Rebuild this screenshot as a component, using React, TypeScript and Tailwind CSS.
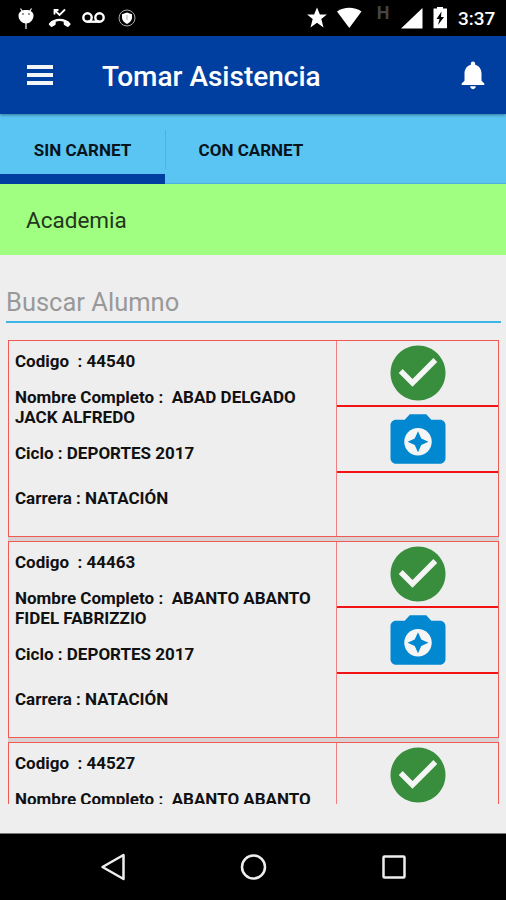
import type { ReactNode } from 'react';

type Student = {
  code: string;
  name: string;
  cycle?: string;
  career?: string;
};

const STUDENTS: Student[] = [
  {
    code: '44540',
    name: 'ABAD DELGADO JACK ALFREDO',
    cycle: 'DEPORTES 2017',
    career: 'NATACIÓN',
  },
  {
    code: '44463',
    name: 'ABANTO ABANTO FIDEL FABRIZZIO',
    cycle: 'DEPORTES 2017',
    career: 'NATACIÓN',
  },
  {
    code: '44527',
    name: 'ABANTO ABANTO',
  },
];

function StatusBar() {
  return (
    <div className="flex h-9 shrink-0 bg-black text-white">
      <svg width="150" height="36" viewBox="0 0 150 36" fill="currentColor">
        {/* debug bean */}
        <path d="M20.5 8.5l2 3M31.5 8.5l-2 3M26 23v6" stroke="currentColor" strokeWidth="1.2" />
        <path d="M18.5 15.5c0-3.5 3.2-5.5 7.5-5.5s7.5 2 7.5 5.5c0 4.5-3.7 8-7.5 8s-7.5-3.5-7.5-8z" />
        <circle cx="23" cy="14" r="0.9" fill="#666" />
        <circle cx="29" cy="14" r="0.9" fill="#666" />
        {/* missed call */}
        <path d="M54.5 14.5v-4.5h4M54.5 10l5 5 5.5-5.5" fill="none" stroke="currentColor" strokeWidth="1.8" />
        <path d="M49 23.5c2.5-3.2 6.5-4.7 10.7-4.7s8.2 1.5 10.7 4.7c.3.4.3.9 0 1.2l-2 2c-.3.3-.8.3-1.2.1l-3-1.8c-.3-.2-.5-.5-.5-.9v-2.4c-2.6-.8-5.4-.8-8 0v2.4c0 .4-.2.7-.5.9l-3 1.8c-.4.2-.9.2-1.2-.1l-2-2c-.3-.3-.3-.8 0-1.2z" />
        {/* voicemail */}
        <g fill="none" stroke="currentColor" strokeWidth="2.4">
          <circle cx="87.5" cy="17.5" r="4.2" />
          <circle cx="99.5" cy="17.5" r="4.2" />
          <path d="M87.5 21.7h12" />
        </g>
        {/* shield */}
        <circle cx="127" cy="18" r="8" fill="none" stroke="#aaa" strokeWidth="1" />
        <path d="M127 12.5l5 1.8v3c0 3-2 5.5-5 6.7-3-1.2-5-3.7-5-6.7v-3z" />
        <path d="M127 15v5" stroke="#aaa" strokeWidth="1" />
      </svg>
      {/* star and wifi */}
      <svg className="ml-auto" width="60" height="36" viewBox="0 0 60 36" fill="currentColor">
        <path d="M12 7.5l2.9 7h7l-5.6 4.6 2.2 8.3-6.5-4.7-6.5 4.7 2.2-8.3-5.6-4.6h7z" />
        <path d="M32 11.5c7-5 17.5-5 24.5 0l-12.2 16.5z" />
      </svg>
      <span className="mt-[3px] w-9 text-center text-[18px] leading-5 font-bold text-[#444]">
        H
      </span>
      {/* signal and battery */}
      <svg width="49" height="36" viewBox="96 0 49 36" fill="currentColor">
        <path d="M117.5 8v20.5H96z" />
        <path d="M128.5 8.5h3.5v-1.5h6v1.5h4v19.7h-13.5z" />
        <path d="M136.5 11.5l-5 7.5h3l-1.5 6 6-8h-3z" fill="#000" />
      </svg>
      <span className="mt-[9px] w-[56px] pl-2 text-[19px] leading-5 font-medium">
        3:37
      </span>
    </div>
  );
}

function Toolbar() {
  return (
    <header className="relative z-10 flex h-[78px] shrink-0 items-center bg-[#003f9f] pl-[27px] text-white shadow-[0_1px_3px_rgba(0,0,0,0.4)]">
      <div className="-mt-px flex w-[26px] flex-col gap-1">
        <div className="h-1 bg-[#f4f4fb]" />
        <div className="h-1 bg-[#f4f4fb]" />
        <div className="h-1 bg-[#f4f4fb]" />
      </div>
      <h1 className="ml-[49px] pt-[3px] text-[28px] font-medium">Tomar Asistencia</h1>
      <svg className="mr-4 ml-auto" width="34" height="34" viewBox="0 0 24 24" fill="currentColor">
        <path d="M12 22c1.1 0 2-.9 2-2h-4c0 1.1.9 2 2 2zm6-6v-5c0-3.07-1.64-5.64-4.5-6.32V4c0-.83-.67-1.5-1.5-1.5s-1.5.67-1.5 1.5v.68C7.63 5.36 6 7.92 6 11v5l-2 2v1h16v-1l-2-2z" />
      </svg>
    </header>
  );
}

function Tabs() {
  return (
    <nav className="flex h-[70px] shrink-0 border-b border-[#50aedb] bg-[#5ac5f3] text-[17px] font-bold text-[#07141b]">
      <button className="-mb-px h-[70px] w-[165px] border-b-[10px] border-[#003f9f] pt-3.5">
        SIN CARNET
      </button>
      <div className="mt-4 h-[39px] w-px bg-[#50b1dc]" />
      <button className="h-[70px] w-[170px] pt-1">CON CARNET</button>
    </nav>
  );
}

function CheckIcon() {
  return (
    <svg className="shrink-0" width="66" height="66" viewBox="0 0 24 24" fill="#388e3c">
      <path d="M12 2C6.48 2 2 6.48 2 12s4.48 10 10 10 10-4.48 10-10S17.52 2 12 2z" />
      <path d="M10 17l-5-5 1.41-1.41L10 14.17l7.59-7.59L19 8l-9 9z" fill="#f5f5f5" />
    </svg>
  );
}

function CameraIcon() {
  return (
    <svg className="shrink-0" width="66" height="66" viewBox="0 0 24 24" fill="#0288d1">
      <path d="M9 3L7.17 5H4c-1.1 0-2 .9-2 2v12c0 1.1.9 2 2 2h16c1.1 0 2-.9 2-2V7c0-1.1-.9-2-2-2h-3.17L15 3H9z" />
      <circle cx="12" cy="13" r="5" fill="#f5f5f5" />
      <path d="M12 9.2l1.19 2.61L15.8 13l-2.61 1.19L12 16.8l-1.19-2.61L8.2 13l2.61-1.19z" />
    </svg>
  );
}

function ActionCell({ children }: { children?: ReactNode }) {
  return (
    <div className="flex h-[66px] items-center justify-center last:h-[63px]">
      {children}
    </div>
  );
}

function StudentCard({ student }: { student: Student }) {
  return (
    <li className="flex h-[197px] shrink-0 border border-[#ef5a55]">
      <div className="w-[327px] pt-[10px] pl-[6px] text-[17px] leading-5 font-bold whitespace-pre-wrap">
        <p>{`Codigo  : ${student.code}`}</p>
        <p className="mt-4">{`Nombre Completo :  ${student.name}`}</p>
        {student.cycle && <p className="mt-4">{`Ciclo : ${student.cycle}`}</p>}
        {student.career && (
          <p className="mt-[25px]">{`Carrera : ${student.career}`}</p>
        )}
      </div>
      <div className="flex-1 divide-y-2 divide-[#f21414] border-l border-[#f28080]">
        <ActionCell>
          <CheckIcon />
        </ActionCell>
        <ActionCell>
          <CameraIcon />
        </ActionCell>
        <ActionCell />
      </div>
    </li>
  );
}

function NavigationBar() {
  return (
    <div className="h-[67px] shrink-0 border-t border-[#777] bg-black">
      <svg width="506" height="66" viewBox="0 0 506 66" fill="none" stroke="#eee" strokeWidth="2.5">
        <path d="M123.5 21v24L102.5 33z" strokeLinejoin="round" />
        <circle cx="253.5" cy="33" r="11.5" />
        <rect x="383.5" y="22.5" width="21" height="21" rx="1" />
      </svg>
    </div>
  );
}

export default function App() {
  return (
    <div className="flex h-[900px] w-[506px] flex-col overflow-hidden bg-[#eeeeee] font-[Roboto,sans-serif] text-[#111]">
      <StatusBar />
      <Toolbar />
      <Tabs />
      <div className="flex h-[71px] shrink-0 items-center bg-[#a0ff80] pt-0.5 pl-[26px] text-[22.5px] text-[#23351c]">
        Academia
      </div>
      <div className="mx-[6px] mt-[26px] h-[42px] w-[495px] shrink-0 border-b-2 border-[#3db5e6] text-[25.5px] leading-[43px] text-[#999]">
        Buscar Alumno
      </div>
      <ul className="mx-2 mt-[17px] flex h-[464px] w-[491px] shrink-0 flex-col gap-1 overflow-hidden bg-[#dad2d2] *:bg-[#eeeeee]">
        {STUDENTS.map((student) => (
          <StudentCard key={student.code} student={student} />
        ))}
      </ul>
      <div className="flex-1" />
      <NavigationBar />
    </div>
  );
}
